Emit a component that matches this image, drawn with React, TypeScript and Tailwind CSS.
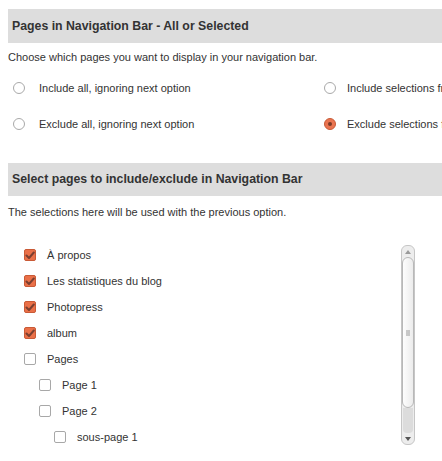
import React from "react";

const font = { fontFamily: '"Liberation Sans", Arial, sans-serif' };

function Radio({ checked }: { checked?: boolean }) {
  if (checked) {
    return (
      <span className="flex h-[12px] w-[12px] shrink-0 items-center justify-center rounded-full border border-[#c85a36] bg-[#ea7450]">
        <span className="h-[4px] w-[4px] rounded-full bg-[#7a3a28]" />
      </span>
    );
  }
  return <span className="h-[12px] w-[12px] shrink-0 rounded-full border border-[#a9a9a9] bg-white" />;
}

function Check({ checked }: { checked?: boolean }) {
  if (checked) {
    return (
      <span className="flex h-[12px] w-[12px] shrink-0 items-center justify-center rounded-[2px] border border-[#c95a36] bg-[#ea7048]">
        <svg width="10" height="9" viewBox="0 0 10 9">
          <path d="M1.5 4.5 L4 7 L8.8 1.5" fill="none" stroke="#7b3f30" strokeWidth="2" strokeLinecap="round" strokeLinejoin="round" />
        </svg>
      </span>
    );
  }
  return <span className="h-[12px] w-[12px] shrink-0 rounded-[2px] border border-[#a8a8a8] bg-white" />;
}

const items: { label: string; level: number; checked: boolean }[] = [
  { label: "À propos", level: 0, checked: true },
  { label: "Les statistiques du blog", level: 0, checked: true },
  { label: "Photopress", level: 0, checked: true },
  { label: "album", level: 0, checked: true },
  { label: "Pages", level: 0, checked: false },
  { label: "Page 1", level: 1, checked: false },
  { label: "Page 2", level: 1, checked: false },
  { label: "sous-page 1", level: 2, checked: false },
];

const indent = ["pl-[16px]", "pl-[31px]", "pl-[46px]"];

export default function App() {
  return (
    <div className="h-[461px] w-[442px] overflow-hidden bg-white text-[#333]" style={font}>
      <div className="w-[700px] pl-[8px] pt-[9px]">
        <div className="flex h-[34px] items-center bg-[#dddddd] pl-[4px] text-[12.3px] font-bold text-[#333]">
          Pages in Navigation Bar - All or Selected
        </div>
        <p className="mt-[7px] text-[11px] leading-[14px]">Choose which pages you want to display in your navigation bar.</p>
        <div className="mt-[17px] grid grid-cols-[316px_1fr] gap-y-[22px] text-[11px] leading-[14px]">
          <div className="flex items-center pl-[5px]"><Radio /><span className="ml-[14px]">Include all, ignoring next option</span></div>
          <div className="flex items-center"><Radio /><span className="ml-[11px]">Include selections from below</span></div>
          <div className="flex items-center pl-[5px]"><Radio /><span className="ml-[14px]">Exclude all, ignoring next option</span></div>
          <div className="flex items-center"><Radio checked /><span className="ml-[11px]">Exclude selections from below</span></div>
        </div>
        <div className="mt-[32px] flex h-[33px] items-center bg-[#dddddd] pl-[4px] text-[12.3px] font-bold text-[#333]">
          Select pages to include/exclude in Navigation Bar
        </div>
        <p className="mt-[9px] text-[11px] leading-[14px]">The selections here will be used with the previous option.</p>
        <div className="mt-[26px] flex h-[200px] w-[407px]">
          <div className="-mt-[3px] flex-1">
            {items.map((it) => (
              <div key={it.label} className={`flex h-[26px] items-center text-[11px] ${indent[it.level]}`}>
                <Check checked={it.checked} />
                <span className="ml-[11px]">{it.label}</span>
              </div>
            ))}
          </div>
          <div className="flex w-[14px] flex-col rounded-[6px] border border-[#c6c6c6] bg-[#ededed]">
            <div className="flex h-[11px] items-center justify-center">
              <svg width="6" height="4" viewBox="0 0 6 4"><path d="M0 4 L3 0 L6 4 Z" fill="#9a9a9a" /></svg>
            </div>
            <div className="relative h-[151px] rounded-[6px] border border-[#b8b8b8] bg-gradient-to-r from-[#fdfdfd] to-[#ececec]">
              <div className="absolute left-1/2 top-1/2 flex -translate-x-1/2 -translate-y-1/2 flex-col gap-[1px]">
                <span className="h-px w-[4px] bg-[#9a9a9a]" />
                <span className="h-px w-[4px] bg-[#9a9a9a]" />
                <span className="h-px w-[4px] bg-[#9a9a9a]" />
              </div>
            </div>
            <div className="mx-[1px] flex-1 rounded-b-[4px] bg-[#dcdcdc]" />
            <div className="flex h-[11px] items-center justify-center">
              <svg width="6" height="4" viewBox="0 0 6 4"><path d="M0 0 L6 0 L3 4 Z" fill="#555" /></svg>
            </div>
          </div>
        </div>
      </div>
    </div>
  );
}
